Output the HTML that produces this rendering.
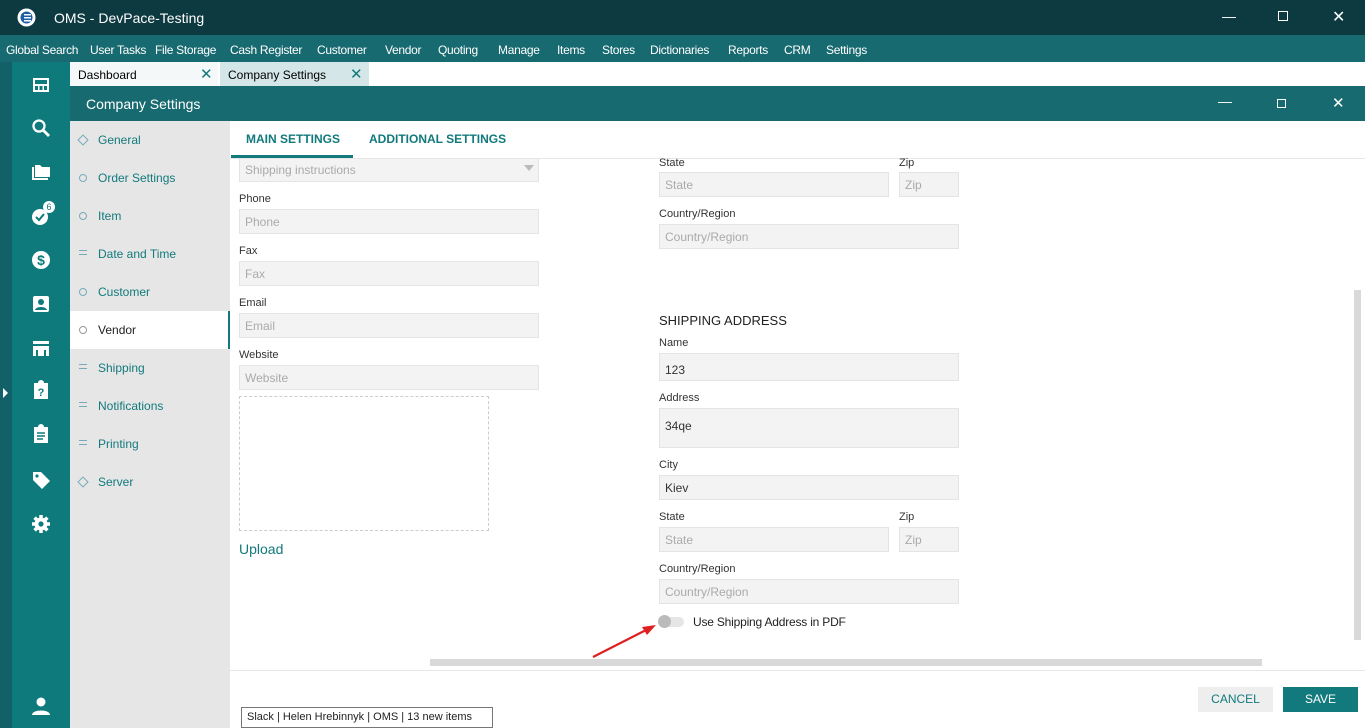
<!DOCTYPE html>
<html><head><meta charset="utf-8"><style>
*{box-sizing:border-box;margin:0;padding:0}
body{width:1365px;height:728px;overflow:hidden;font-family:"Liberation Sans",sans-serif;font-size:12px;background:#fff;position:relative}
.abs{position:absolute}
.title{left:0;top:0;width:1365px;height:35px;background:#0c3a40;color:#fff}
.menu{left:0;top:35px;width:1365px;height:27px;background:#176a70;color:#fff;font-size:12px;letter-spacing:-0.3px}
.menu span{position:absolute;top:8px}
.strip{left:0;top:62px;width:12px;height:666px;background:#136168}
.icons{left:12px;top:62px;width:58px;height:666px;background:#0f7a7c}
.ic{position:absolute;left:19px;width:20px;height:20px;fill:#fff}
.tabs{left:70px;top:62px;width:1295px;height:24px;background:#fff}
.hdr{left:70px;top:86px;width:1295px;height:35px;background:#176a70;color:#fff;font-size:14px}
.nav{left:70px;top:121px;width:160px;height:607px;background:#e6e6e6}
.nav div{position:absolute;left:0;width:160px;height:38px;color:#127a7c;font-size:12px;padding:12px 0 0 28px}
.nav i{position:absolute;left:9px;top:15px;width:8px;height:8px;border:1.5px solid #7ab;border-radius:50%}
.lbl{position:absolute;font-size:11px;color:#333}
.inp{position:absolute;background:#f3f3f3;border:1px solid #e4e4e4;color:#aaa;font-size:12px;padding:5px 5px}
.inp.v{color:#333}
</style></head><body>
<div class="abs title">
 <svg class="abs" style="left:17px;top:8px" width="19" height="19"><circle cx="9.5" cy="9.5" r="9" fill="#fff"/><circle cx="9.5" cy="9.5" r="6" fill="#1b5fa8"/><rect x="7" y="6" width="7" height="1.5" fill="#fff"/><rect x="7" y="9" width="7" height="1.5" fill="#fff"/><rect x="7" y="12" width="7" height="1.5" fill="#fff"/></svg>
 <span class="abs" style="left:54px;top:10px;font-size:14px">OMS - DevPace-Testing</span>
 <span class="abs" style="left:1222px;top:8px;font-size:14px">—</span>
 <span class="abs" style="left:1278px;top:11px;width:10px;height:10px;border:1.3px solid #fff"></span>
 <span class="abs" style="left:1332px;top:7px;font-size:16px">✕</span>
</div>
<div class="abs menu">
<span style="left:6px">Global Search</span><span style="left:90px">User Tasks</span><span style="left:155px">File Storage</span><span style="left:230px">Cash Register</span><span style="left:317px">Customer</span><span style="left:385px">Vendor</span><span style="left:438px">Quoting</span><span style="left:498px">Manage</span><span style="left:557px">Items</span><span style="left:602px">Stores</span><span style="left:650px">Dictionaries</span><span style="left:728px">Reports</span><span style="left:784px">CRM</span><span style="left:826px">Settings</span>
</div>
<div class="abs strip"><span class="abs" style="left:3px;top:326px;width:0;height:0;border-left:5px solid #fff;border-top:5px solid transparent;border-bottom:5px solid transparent"></span></div>
<div class="abs icons">
 <svg class="ic" style="top:13px" viewBox="0 0 20 20"><path d="M2 3h16v14H2z M4 5v4h12V5z M4 11v4h3v-4z M8.5 11v4h3v-4z M13 11v4h3v-4z" fill-rule="evenodd"/></svg>
 <svg class="ic" style="top:56px" viewBox="0 0 20 20"><circle cx="8" cy="8" r="5.5" fill="none" stroke="#fff" stroke-width="2.3"/><path d="M12 12l6 6" stroke="#fff" stroke-width="2.8"/></svg>
 <svg class="ic" style="top:100px" viewBox="0 0 20 20"><path d="M1 5h2v11h14v2H1z M4 3h5l2 2h8v10H4z"/></svg>
 <svg class="ic" style="top:144px" viewBox="0 0 20 20"><circle cx="9" cy="11" r="8"/><path d="M5 11l3 3 5-6" stroke="#0f7a7c" stroke-width="2" fill="none"/></svg>
 <span class="abs" style="left:31px;top:139px;width:12px;height:12px;border-radius:50%;background:#fff;color:#0f7a7c;font-size:9px;text-align:center;line-height:12px">6</span>
 <svg class="ic" style="top:188px" viewBox="0 0 20 20"><circle cx="10" cy="10" r="9"/><text x="10" y="15" font-size="14" font-weight="bold" text-anchor="middle" fill="#0f7a7c" font-family="Liberation Sans">$</text></svg>
 <svg class="ic" style="top:232px" viewBox="0 0 20 20"><rect x="2" y="2" width="16" height="16" rx="2"/><circle cx="10" cy="8" r="3" fill="#0f7a7c"/><path d="M4 16c1-4 11-4 12 0z" fill="#0f7a7c"/></svg>
 <svg class="ic" style="top:276px" viewBox="0 0 20 20"><path d="M2 3h16v3H2z M2 8h16v10h-3v-6H5v6H2z M7 12h6v6H7z"/></svg>
 <svg class="ic" style="top:318px" viewBox="0 0 20 20"><path d="M3 3h4a3 3 0 0 1 6 0h4v16H3z"/><text x="10" y="16" font-size="11" font-weight="bold" text-anchor="middle" fill="#0f7a7c" font-family="Liberation Sans">?</text></svg>
 <svg class="ic" style="top:362px" viewBox="0 0 20 20"><path d="M3 3h4a3 3 0 0 1 6 0h4v16H3z"/><path d="M6 9h8M6 12h8M6 15h6" stroke="#0f7a7c" stroke-width="1.6"/></svg>
 <svg class="ic" style="top:408px" viewBox="0 0 20 20"><path d="M2 2h8l9 9-8 8-9-9z"/><circle cx="6" cy="6" r="1.6" fill="#0f7a7c"/></svg>
 <svg class="ic" style="top:452px" viewBox="0 0 20 20"><circle cx="10" cy="10" r="6.5"/><path d="M10 1v18M1 10h18M3.6 3.6l12.8 12.8M16.4 3.6L3.6 16.4" stroke="#fff" stroke-width="3.5"/><circle cx="10" cy="10" r="2.6" fill="#0f7a7c"/></svg>
 <svg class="ic" style="top:634px" viewBox="0 0 20 20"><circle cx="10" cy="6" r="4.5"/><path d="M1 19c0-6 18-6 18 0z"/></svg>
</div>
<div class="abs tabs">
 <div class="abs" style="left:0;top:0;width:148px;height:24px;background:#f5f8f8;font-size:12px;padding:6px 8px">Dashboard<span class="abs" style="left:130px;top:3px;color:#127a7c;font-size:15px">✕</span></div>
 <div class="abs" style="left:150px;top:0;width:149px;height:24px;background:#d4e6e7;font-size:12px;padding:6px 8px">Company Settings<span class="abs" style="left:130px;top:3px;color:#127a7c;font-size:15px">✕</span></div>
</div>
<div class="abs hdr"><span class="abs" style="left:16px;top:10px">Company Settings</span>
 <span class="abs" style="left:1148px;top:7px">—</span>
 <span class="abs" style="left:1207px;top:13px;width:9px;height:9px;border:1.2px solid #fff"></span>
 <span class="abs" style="left:1262px;top:8px;font-size:15px">✕</span></div>
<div class="abs nav">
 <div style="top:0"><i style="border-radius:0;transform:rotate(45deg)"></i>General</div>
 <div style="top:38px"><i></i>Order Settings</div>
 <div style="top:76px"><i></i>Item</div>
 <div style="top:114px"><i style="border:none;border-top:1.5px solid #7ab;border-bottom:1.5px solid #7ab;height:5px;border-radius:0"></i>Date and Time</div>
 <div style="top:152px"><i></i>Customer</div>
 <div style="top:190px;background:#fff;color:#222;border-right:2px solid #127a7c"><i style="border-color:#999"></i>Vendor</div>
 <div style="top:228px"><i style="border:none;border-top:1.5px solid #7ab;border-bottom:1.5px solid #7ab;height:5px;border-radius:0"></i>Shipping</div>
 <div style="top:266px"><i style="border:none;border-top:1.5px solid #7ab;border-bottom:1.5px solid #7ab;height:5px;border-radius:0"></i>Notifications</div>
 <div style="top:304px"><i style="border:none;border-top:1.5px solid #7ab;border-bottom:1.5px solid #7ab;height:5px;border-radius:0"></i>Printing</div>
 <div style="top:342px"><i style="border-radius:0;transform:rotate(45deg)"></i>Server</div>
</div>
<div class="abs" style="left:246px;top:132px;color:#127a7c;font-weight:bold;font-size:12px">MAIN SETTINGS</div>
<div class="abs" style="left:231px;top:155px;width:122px;height:3px;background:#127a7c"></div>
<div class="abs" style="left:369px;top:132px;color:#127a7c;font-weight:bold;font-size:12px">ADDITIONAL SETTINGS</div>
<div class="abs" style="left:230px;top:158px;width:1135px;height:1px;background:#e6e6e6"></div>

<div class="inp" style="left:239px;top:159px;width:300px;height:23px;padding-top:4px;border-top:none">Shipping instructions<span style="position:absolute;right:4px;top:6px;border-top:6px solid #bbb;border-left:5px solid transparent;border-right:5px solid transparent"></span></div>
<div class="lbl" style="left:239px;top:193px">Phone</div><div class="inp" style="left:239px;top:209px;width:300px;height:25px">Phone</div>
<div class="lbl" style="left:239px;top:245px">Fax</div><div class="inp" style="left:239px;top:261px;width:300px;height:25px">Fax</div>
<div class="lbl" style="left:239px;top:297px">Email</div><div class="inp" style="left:239px;top:313px;width:300px;height:25px">Email</div>
<div class="lbl" style="left:239px;top:349px">Website</div><div class="inp" style="left:239px;top:365px;width:300px;height:25px">Website</div>
<div class="abs" style="left:239px;top:396px;width:250px;height:135px;border:1px dashed #ccc"></div>
<div class="abs" style="left:239px;top:541px;color:#127a7c;font-size:14px">Upload</div>

<div class="lbl" style="left:659px;top:157px">State</div><div class="lbl" style="left:899px;top:157px">Zip</div>
<div class="inp" style="left:659px;top:172px;width:230px;height:25px">State</div><div class="inp" style="left:899px;top:172px;width:60px;height:25px">Zip</div>
<div class="lbl" style="left:659px;top:208px">Country/Region</div><div class="inp" style="left:659px;top:224px;width:300px;height:25px">Country/Region</div>
<div class="abs" style="left:659px;top:313px;font-size:13px;color:#222">SHIPPING ADDRESS</div>
<div class="lbl" style="left:659px;top:337px">Name</div><div class="inp v" style="left:659px;top:353px;width:300px;height:28px;padding-top:9px">123</div>
<div class="lbl" style="left:659px;top:392px">Address</div><div class="inp v" style="left:659px;top:408px;width:300px;height:40px;padding-top:10px">34qe</div>
<div class="lbl" style="left:659px;top:459px">City</div><div class="inp v" style="left:659px;top:475px;width:300px;height:25px">Kiev</div>
<div class="lbl" style="left:659px;top:511px">State</div><div class="lbl" style="left:899px;top:511px">Zip</div>
<div class="inp" style="left:659px;top:527px;width:230px;height:25px">State</div><div class="inp" style="left:899px;top:527px;width:60px;height:25px">Zip</div>
<div class="lbl" style="left:659px;top:563px">Country/Region</div><div class="inp" style="left:659px;top:579px;width:300px;height:25px">Country/Region</div>
<div class="abs" style="left:659px;top:617px;width:25px;height:10px;border-radius:5px;background:#e6e6e6"></div>
<div class="abs" style="left:658px;top:615px;width:13px;height:13px;border-radius:50%;background:#bbb"></div>
<div class="abs" style="left:693px;top:615px;font-size:12px;color:#222;letter-spacing:-0.2px">Use Shipping Address in PDF</div>
<svg class="abs" style="left:590px;top:615px" width="70" height="45"><path d="M3 42L62 12" stroke="#e02020" stroke-width="2.2"/><path d="M66 10l-14 2 5 8z" fill="#e02020"/></svg>

<div class="abs" style="left:1354px;top:290px;width:7px;height:350px;background:#d9d9d9"></div>
<div class="abs" style="left:430px;top:659px;width:832px;height:7px;background:#d9d9d9"></div>
<div class="abs" style="left:230px;top:670px;width:1135px;height:1px;background:#e6e6e6"></div>
<div class="abs" style="left:1198px;top:687px;width:75px;height:25px;background:#eee;color:#127a7c;font-size:12px;text-align:center;line-height:25px">CANCEL</div>
<div class="abs" style="left:1283px;top:687px;width:75px;height:25px;background:#127a7c;color:#fff;font-size:12px;text-align:center;line-height:25px">SAVE</div>
<div class="abs" style="left:241px;top:707px;width:252px;height:21px;background:#fff;border:1px solid #777;font-size:11px;color:#222;padding:3px 5px">Slack | Helen Hrebinnyk | OMS | 13 new items</div>
</body></html>
